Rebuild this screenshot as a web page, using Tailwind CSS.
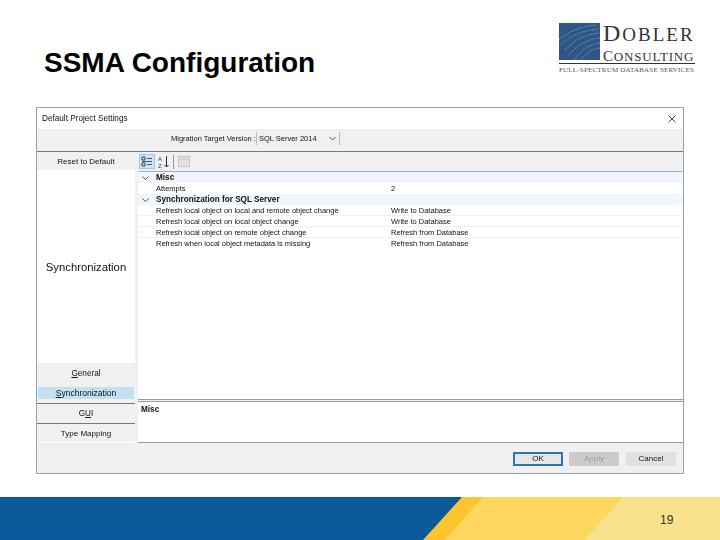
<!DOCTYPE html>
<html lang="en">
<head>
<meta charset="UTF-8">
<title>SSMA Configuration</title>
<script src="https://cdn.jsdelivr.net/npm/@tailwindcss/browser@4"></script>
</head>
<body class="bg-white font-['Liberation_Sans',sans-serif]">
<div class="w-[720px] h-[540px] overflow-hidden flex flex-col">

    <!-- header -->
    <div class="h-[107px] flex items-start justify-between pl-[44px] pr-[25px]">
        <h1 class="mt-[46px] text-[28px] leading-[34px] font-bold text-black">SSMA Configuration</h1>
        <div class="mt-[23px] w-[136px]">
            <div class="flex h-[37px]">
                <svg class="w-[41px] h-[37px]" viewBox="0 0 41 37">
                    <rect width="41" height="37" fill="#2f5687"/>
                    <g fill="none" stroke="#8ea6c6" stroke-width="1" stroke-dasharray="1 1.2">
                        <path d="M0 17C10 8 22 3 38 2"/>
                        <path d="M2 22C12 12 24 7 40 6"/>
                        <path d="M6 27C15 17 27 11 41 10"/>
                        <path d="M10 32C18 22 29 16 41 15"/>
                        <path d="M15 37C22 27 31 21 41 20"/>
                        <path d="M22 37C27 30 33 26 41 25"/>
                    </g>
                </svg>
                <div class="ml-[3px] font-['Liberation_Serif',serif] text-[#333] uppercase whitespace-nowrap">
                    <div class="text-[24px] leading-[20px] tracking-[2px]">D<span class="text-[19px]">obler</span></div>
                    <div class="mt-[5px] text-[15px] leading-[12px] tracking-[0.8px]">C<span class="text-[13px]">onsulting</span></div>
                </div>
            </div>
            <div class="mt-[3px] h-px bg-[#333]"></div>
            <div class="mt-[2px] font-['Liberation_Serif',serif] text-[7px] leading-[8px] tracking-[0.2px] text-[#555] whitespace-nowrap uppercase">Full-Spectrum Database Services</div>
        </div>
    </div>

    <!-- dialog screenshot -->
    <div class="ml-[36px] w-[648px] h-[367px] border border-[#8fa5b5] bg-[#f0f0f0] text-[7.5px] text-[#111] flex flex-col blur-[0.3px]">
        <div class="h-[21px] bg-white flex items-center justify-between pl-[5px] pr-[7px]">
            <span class="text-[8.2px] pt-[1px]">Default Project Settings</span>
            <svg class="w-[8px] h-[8px]" viewBox="0 0 8 8"><path d="M.5.5l7 7M7.5.5l-7 7" stroke="#444" fill="none"/></svg>
        </div>
        <div class="h-[23px] flex items-start pt-[3px] border-b border-[#777] pl-[134px]">
            <span class="whitespace-nowrap leading-[13px]">Migration Target Version :</span>
            <div class="w-[84px] h-[13px] border-x border-[#bbb] flex items-center justify-between pl-[2px] pr-[3px]">
                <span>SQL Server 2014</span>
                <svg class="w-[7px] h-[5px]" viewBox="0 0 7 5"><path d="M.5 1l3 3 3-3" stroke="#555" fill="none"/></svg>
            </div>
        </div>
        <div class="flex-1 flex min-h-0">
            <!-- left nav -->
            <div class="w-[98px] flex flex-col text-[8px]">
                <div class="h-[18px] flex items-center justify-center pt-[1px]">Reset to Default</div>
                <div class="h-[193px] bg-white flex items-center justify-center text-[11.3px] pt-[2px]">Synchronization</div>
                <div class="h-[24px] flex items-center justify-center pb-[2px] text-[8.2px]"><span><u>G</u>eneral</span></div>
                <div class="h-[12px] mx-[1px] bg-[#c5dff3] flex items-center justify-center text-[8.5px]"><span><u>S</u>ynchronization</span></div>
                <div class="h-[4px]"></div>
                <div class="h-[20px] border-t border-[#777] flex items-center justify-center pt-[1px] text-[8.2px]"><span>G<u>U</u>I</span></div>
                <div class="h-[20px] border-t border-[#777] border-b border-b-white flex items-center justify-center pt-[1px]">Type Mapping</div>
            </div>
            <!-- property grid -->
            <div class="flex-1 ml-[3px] flex flex-col min-w-0">
                <div class="h-[20px] flex items-center border-b border-[#9fb2bf] pl-[1px]">
                    <svg class="w-[16px] h-[15px]" viewBox="0 0 16 15">
                        <rect x=".5" y=".5" width="15" height="14" fill="#cde4f7" stroke="#9cc7e8"/>
                        <path d="M3 3h3v3H3zM3 9h3v3H3z" fill="none" stroke="#345"/>
                        <path d="M8 4.5h5M8 10.5h5M3 7.5h10" stroke="#456"/>
                    </svg>
                    <svg class="w-[12px] h-[15px] ml-[3px]" viewBox="0 0 12 15">
                        <text x="0" y="6.5" font-size="6" font-family="Liberation Sans" fill="#345">A</text>
                        <text x="0" y="13.5" font-size="6" font-family="Liberation Sans" fill="#345">Z</text>
                        <path d="M8.5 2v11M6.5 11l2 2 2-2" stroke="#333" fill="none"/>
                    </svg>
                    <div class="w-px h-[14px] bg-[#999] ml-[3px]"></div>
                    <svg class="w-[12px] h-[11px] ml-[4px]" viewBox="0 0 12 11">
                        <rect x=".5" y=".5" width="11" height="10" fill="#e2e2e2" stroke="#c4c4c4"/>
                        <path d="M2 3h8" stroke="#c4c4c4"/>
                    </svg>
                </div>
                <div class="flex-1 bg-white flex flex-col">
                    <div class="h-[11px] bg-[#f0f6fb] flex items-center font-bold text-[8.2px]"><span class="w-[18px] pr-[3px] flex justify-center"><svg class="w-[7px] h-[4px]" viewBox="0 0 7 4"><path d="M.5.5l3 3 3-3" stroke="#555" fill="none"/></svg></span><span class="pt-[1px]">Misc</span></div>
                    <div class="h-[11px] flex items-center pl-[18px] pt-[1px]"><span class="w-[235px]">Attempts</span><span>2</span></div>
                    <div class="h-[11px] bg-[#f0f6fb] flex items-center font-bold text-[8.2px]"><span class="w-[18px] pr-[3px] flex justify-center"><svg class="w-[7px] h-[4px]" viewBox="0 0 7 4"><path d="M.5.5l3 3 3-3" stroke="#555" fill="none"/></svg></span><span class="pt-[1px]">Synchronization for SQL Server</span></div>
                    <div class="h-[11px] flex items-center border-b border-[#f0f0f0] pl-[18px] pt-[1px]"><span class="w-[235px]">Refresh local object on local and remote object change</span><span>Write to Database</span></div>
                    <div class="h-[11px] flex items-center border-b border-[#f0f0f0] pl-[18px] pt-[1px]"><span class="w-[235px]">Refresh local object on local object change</span><span>Write to Database</span></div>
                    <div class="h-[11px] flex items-center border-b border-[#f0f0f0] pl-[18px] pt-[1px]"><span class="w-[235px]">Refresh local object on remote object change</span><span>Refresh from Database</span></div>
                    <div class="h-[11px] flex items-center pl-[18px] pt-[1px]"><span class="w-[235px]">Refresh when local object metadata is missing</span><span>Refresh from Database</span></div>
                </div>
                <div class="h-[3px] border-y border-[#999]"></div>
                <div class="h-[41px] bg-white px-[3px] pt-[2px] font-bold text-[8.2px] border-b border-[#999]">Misc</div>
            </div>
        </div>
        <div class="h-[30px] flex items-center justify-end gap-[6px] pr-[7px] pt-[2px] text-[8px]">
            <div class="w-[50px] h-[14px] border-2 border-[#2a77b5] bg-[#e6e6e6] flex items-center justify-center">OK</div>
            <div class="w-[50px] h-[14px] bg-[#cccccc] text-[#999] flex items-center justify-center">Apply</div>
            <div class="w-[50px] h-[14px] bg-[#e1e1e1] flex items-center justify-center ml-[1px]">Cancel</div>
        </div>
    </div>

    <!-- footer band -->
    <div class="relative mt-[23px] flex-1 bg-[#fae28c]">
        <svg class="absolute inset-0 w-[720px] h-[43px]" viewBox="0 0 720 43">
            <polygon points="0,0 623,0 585,43 0,43" fill="#fdd760"/>
            <polygon points="0,0 483,0 445,43 0,43" fill="#fcc530"/>
            <polygon points="0,0 462,0 423,43 0,43" fill="#0b5a9c"/>
        </svg>
        <span class="absolute left-[660px] top-[16px] text-[12px] leading-[14px] text-[#333]">19</span>
    </div>
</div>
</body>
</html>
